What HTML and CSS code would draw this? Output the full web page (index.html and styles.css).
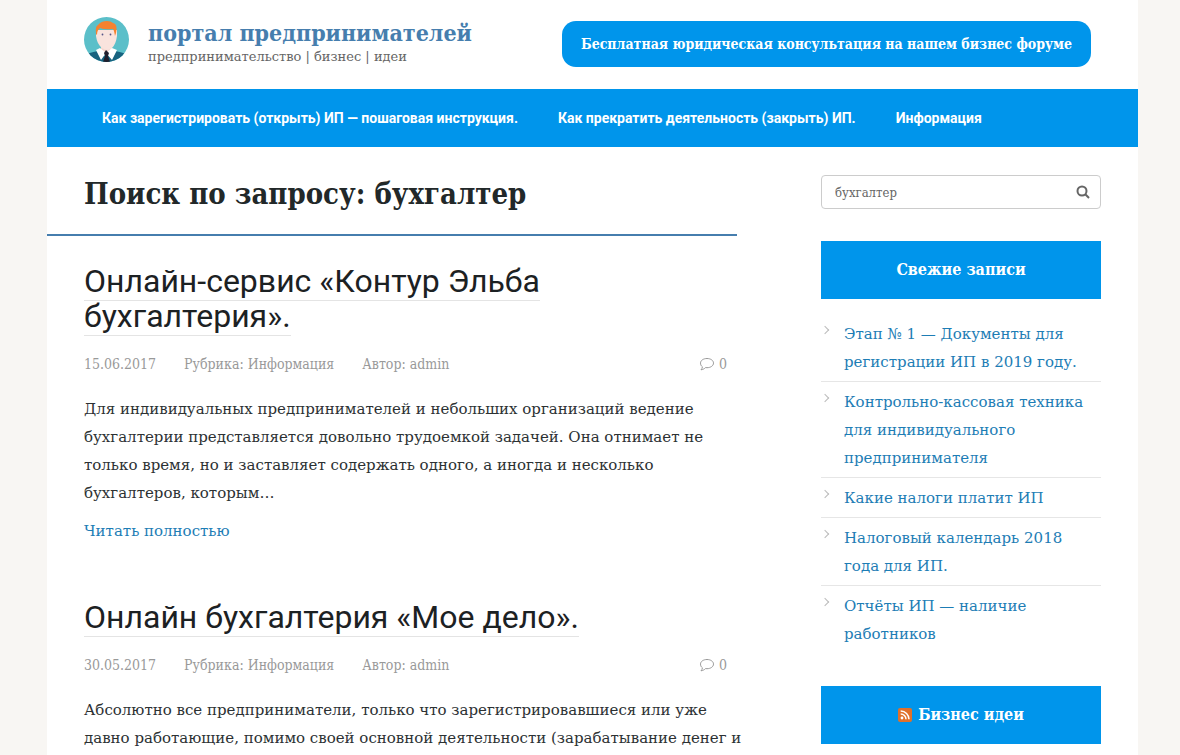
FILE: index.html
```html
<!DOCTYPE html>
<html lang="ru">
<head>
<meta charset="utf-8">
<meta name="viewport" content="width=device-width, initial-scale=1">
<title>Поиск по запросу: бухгалтер</title>
<link rel="stylesheet" href="styles.css">
</head>
<body>
<div class="site">
  <header class="header">
    <a class="brand" href="#">
      <svg class="logo" viewBox="0 0 45 45" aria-hidden="true">
        <defs><clipPath id="disc"><circle cx="22.500" cy="22.500" r="22.500"/></clipPath></defs>
        <g clip-path="url(#disc)">
          <rect width="45" height="45" fill="#5bbfc9"/>
          <path d="M1 45V38q3-2 13-4l8 6 9-6q10 2 13 4v7z" fill="#17627f"/>
          <path d="M17 27h11v7l-5 6-6-6z" fill="#f5d5cc"/>
          <path d="M12 13h21v6q-1 8-5 12-5 4-10 0-5-4-6-12z" fill="#f9e3dd"/>
          <path d="M12 17q-1-8 2-9 3-4 9-4 4 0 6 2 5 1 3 10l-1 3q-1-6-2-7-9 1-13-1-3 2-3 7z" fill="#f5822f"/>
          <path d="M16 31l6 5-5 7-5-10zM28 31l-6 5 6 7 5-10z" fill="#fff"/>
          <path d="M22 33l3 3-1 3 2 6h-7l2-6-1-3z" fill="#20202e"/>
          <circle cx="18.500" cy="17.500" r=".9" fill="#558"/><circle cx="26.500" cy="17.500" r=".9" fill="#558"/>
        </g>
      </svg>
      <span class="brand-text">
        <strong class="brand-name">портал предпринимателей</strong>
        <span class="brand-tagline">предпринимательство | бизнес | идеи</span>
      </span>
    </a>
    <a class="forum-link" href="#">Бесплатная юридическая консультация на нашем бизнес форуме</a>
  </header>
  <nav class="nav" aria-label="Главное меню">
    <a href="#">Как зарегистрировать (открыть) ИП — пошаговая инструкция.</a>
    <a href="#">Как прекратить деятельность (закрыть) ИП.</a>
    <a href="#">Информация</a>
  </nav>
  <div class="content">
    <main class="results">
      <h1 class="page-title">Поиск по запросу: бухгалтер</h1>
      <article class="post">
        <h2 class="post-title"><a href="#">Онлайн-сервис «Контур Эльба бухгалтерия».</a></h2>
        <div class="meta">
          <time datetime="2017-06-15">15.06.2017</time><span>Рубрика: Информация</span><span>Автор: admin</span>
          <a class="comments" href="#"><svg viewBox="0 0 16 14" aria-hidden="true"><path d="M8 1.500c3.700 0 6.500 2 6.500 4.600s-2.800 4.600-6.500 4.600l-1.500-.1C5.500 11.700 4 12.500 2 12.800c.8-.8 1.400-1.900 1.400-3C2.200 9 1.500 7.700 1.500 6.100 1.500 3.500 4.300 1.500 8 1.500z"/></svg>0</a>
        </div>
        <p class="excerpt">Для индивидуальных предпринимателей и небольших организаций ведение бухгалтерии представляется довольно трудоемкой задачей. Она отнимает не только время, но и заставляет содержать одного, а иногда и несколько бухгалтеров, которым…</p>
        <a class="more" href="#">Читать полностью</a>
      </article>
      <article class="post">
        <h2 class="post-title"><a href="#">Онлайн бухгалтерия «Мое дело».</a></h2>
        <div class="meta">
          <time datetime="2017-05-30">30.05.2017</time><span>Рубрика: Информация</span><span>Автор: admin</span>
          <a class="comments" href="#"><svg viewBox="0 0 16 14" aria-hidden="true"><path d="M8 1.500c3.700 0 6.500 2 6.500 4.600s-2.800 4.600-6.500 4.600l-1.500-.1C5.500 11.700 4 12.500 2 12.800c.8-.8 1.400-1.900 1.400-3C2.200 9 1.500 7.700 1.500 6.100 1.500 3.500 4.300 1.500 8 1.500z"/></svg>0</a>
        </div>
        <p class="excerpt">Абсолютно все предприниматели, только что зарегистрировавшиеся или уже давно работающие, помимо своей основной деятельности (зарабатывание денег и</p>
      </article>
    </main>
    <aside class="sidebar">
      <form class="search" role="search">
        <input type="search" value="бухгалтер" aria-label="Поиск">
        <button type="submit" aria-label="Найти"><svg viewBox="0 0 14 14" aria-hidden="true"><circle cx="6" cy="6" r="4.500"/><path d="M9.300 9.300L13 13"/></svg></button>
      </form>
      <section class="widget">
        <h2 class="widget-title">Свежие записи</h2>
        <ul class="recent">
          <li><a href="#">Этап № 1 — Документы для регистрации ИП в 2019 году.</a></li>
          <li><a href="#">Контрольно-кассовая техника для индивидуального предпринимателя</a></li>
          <li><a href="#">Какие налоги платит ИП</a></li>
          <li><a href="#">Налоговый календарь 2018 года для ИП.</a></li>
          <li><a href="#">Отчёты ИП — наличие работников</a></li>
        </ul>
      </section>
      <section class="widget">
        <h2 class="widget-title"><svg class="rss" viewBox="0 0 14 14" aria-hidden="true"><rect width="14" height="14" rx="2" fill="#e0702b"/><circle cx="4" cy="10" r="1.400" fill="#fff"/><path d="M2.700 6A5.300 5.300 0 0 1 8 11.300M2.700 3A8.300 8.300 0 0 1 11 11.300" fill="none" stroke="#fff" stroke-width="1.500"/></svg>Бизнес идеи</h2>
      </section>
    </aside>
  </div>
</div>
</body>
</html>
```
FILE: styles.css
```css
* { box-sizing: border-box; }
body {
  margin: 0;
  background: #f8f6f3;
  color: #2c3133;
  font: 15px/28px "DejaVu Serif", serif;
}
a { color: #1d7db5; text-decoration: none; }
h1, h2, p, ul { margin: 0; padding: 0; }
.brand-name, .forum-link, .page-title, .widget-title, .meta, .search input {
  font-family: "DejaVu Serif Condensed", "DejaVu Serif", serif;
}
.site { margin: 0 42px 0 47px; background: #fff; }

.header {
  display: flex;
  align-items: center;
  justify-content: space-between;
  min-height: 89px;
  padding: 0 47px 0 37px;
}
.brand { display: flex; align-items: center; gap: 19px; padding-bottom: 10px; }
.logo { width: 45px; height: 45px; }
.brand-text { display: flex; flex-direction: column; padding-top: 6px; }
.brand-name { color: #467eae; font-size: 23px; line-height: 28px; }
.brand-tagline { color: #666; font-size: 13px; line-height: 20px; }
.forum-link {
  margin-bottom: 2px;
  padding: 9px 19px;
  border-radius: 14px;
  background: #0095eb;
  color: #fff;
  font-size: 14px;
  font-weight: 700;
}

.nav {
  display: flex;
  align-items: center;
  gap: 40px;
  min-height: 58px;
  padding: 0 55px;
  background: #0095eb;
}
.nav a { color: #fff; font: 700 14px/28px Roboto, sans-serif; white-space: nowrap; }

.content {
  display: grid;
  grid-template-columns: minmax(0, 1fr) 280px;
  gap: 84px;
  padding-right: 37px;
}
.results { min-width: 0; }
.page-title {
  padding: 28px 0 21px 37px;
  border-bottom: 2px solid #467eae;
  font-size: 29px;
  line-height: 38px;
  color: #222829;
}
.post { padding: 28px 0 38px 37px; }
.post + .post { padding-top: 17px; }
.post-title { max-width: 500px; font: 400 32px/35px Roboto, sans-serif; }
.post-title a { color: #1c2123; border-bottom: 1px solid #e4e4e4; }
.meta {
  display: flex;
  gap: 28px;
  padding: 16px 10px 17px 0;
  color: #999;
  font-size: 14px;
}
.comments { display: flex; align-items: center; gap: 4px; margin-left: auto; color: #999; }
.comments svg { width: 16px; height: 14px; fill: none; stroke: #999; }
.excerpt { margin: 0 -10px 10px 0; }
.more { display: block; }

.sidebar { padding-top: 28px; }
.search {
  display: flex;
  height: 34px;
  margin-bottom: 32px;
  border: 1px solid #ccc;
  border-radius: 4px;
}
.search input {
  flex: 1;
  min-width: 0;
  padding: 0 13px;
  border: 0;
  background: none;
  color: #666;
  font-size: 13px;
  outline: none;
  appearance: none;
}
.search input::-webkit-search-cancel-button { display: none; }
.search button { display: flex; align-items: center; padding: 0 10px; border: 0; background: none; }
.search svg { width: 14px; height: 14px; fill: none; stroke: #666; stroke-width: 2; }
.widget { margin-bottom: 33px; }
.widget-title {
  display: flex;
  align-items: center;
  justify-content: center;
  gap: 6px;
  min-height: 58px;
  background: #0095eb;
  color: #fff;
  font-size: 16px;
}
.rss { width: 14px; height: 14px; }
.recent { padding-top: 15px; list-style: none; }
.recent li { position: relative; padding: 6px 0 5px 23px; border-bottom: 1px solid #e6e6e6; }
.recent li:last-child { border: 0; }
.recent li::before {
  content: "";
  position: absolute;
  top: 13px;
  left: 1px;
  width: 5px;
  height: 5px;
  border: solid #bbb;
  border-width: 1px 1px 0 0;
  transform: rotate(45deg);
}
```
